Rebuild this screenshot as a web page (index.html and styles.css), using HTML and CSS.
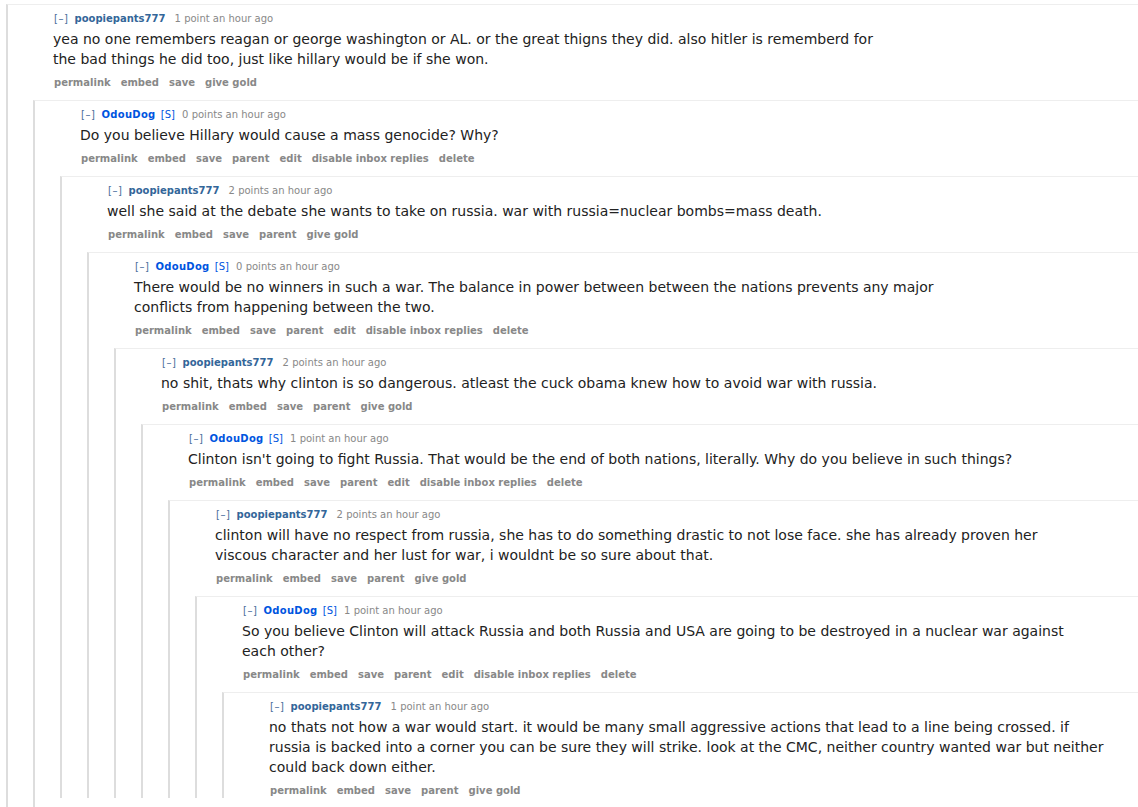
FILE: index.html
```html
<!DOCTYPE html>
<html lang="en">
<head>
    <meta charset="UTF-8">
    <title>comments</title>
    <link rel="stylesheet" href="styles.css">
</head>
<body>
    <div class="commentarea">
        <div class="comment has-more">
            <div class="entry">
                <p class="tagline"><a class="expand">[–]</a> <a class="author">poopiepants777</a> <span class="userattrs"></span> <span class="score">1 point</span> <time>an hour ago</time></p>
                <div class="md">yea no one remembers reagan or george washington or AL. or the great thigns they did. also hitler is rememberd for the bad things he did too, just like hillary would be if she won.</div>
                <ul class="buttons">
                    <li>permalink</li>
                    <li>embed</li>
                    <li>save</li>
                    <li>give gold</li>
                </ul>
            </div>
            <div class="child">

            <div class="comment has-more">
                <div class="entry">
                    <p class="tagline"><a class="expand">[–]</a> <a class="author submitter">OdouDog</a> <span class="userattrs">[S]</span> <span class="score">0 points</span> <time>an hour ago</time></p>
                    <div class="md">Do you believe Hillary would cause a mass genocide? Why?</div>
                    <ul class="buttons">
                        <li>permalink</li>
                        <li>embed</li>
                        <li>save</li>
                        <li>parent</li>
                        <li>edit</li>
                        <li>disable inbox replies</li>
                        <li>delete</li>
                    </ul>
                </div>
                <div class="child">

                <div class="comment">
                    <div class="entry">
                        <p class="tagline"><a class="expand">[–]</a> <a class="author">poopiepants777</a> <span class="userattrs"></span> <span class="score">2 points</span> <time>an hour ago</time></p>
                        <div class="md">well she said at the debate she wants to take on russia. war with russia=nuclear bombs=mass death.</div>
                        <ul class="buttons">
                            <li>permalink</li>
                            <li>embed</li>
                            <li>save</li>
                            <li>parent</li>
                            <li>give gold</li>
                        </ul>
                    </div>
                    <div class="child">

                    <div class="comment">
                        <div class="entry">
                            <p class="tagline"><a class="expand">[–]</a> <a class="author submitter">OdouDog</a> <span class="userattrs">[S]</span> <span class="score">0 points</span> <time>an hour ago</time></p>
                            <div class="md">There would be no winners in such a war. The balance in power between between the nations prevents any major conflicts from happening between the two.</div>
                            <ul class="buttons">
                                <li>permalink</li>
                                <li>embed</li>
                                <li>save</li>
                                <li>parent</li>
                                <li>edit</li>
                                <li>disable inbox replies</li>
                                <li>delete</li>
                            </ul>
                        </div>
                        <div class="child">

                        <div class="comment">
                            <div class="entry">
                                <p class="tagline"><a class="expand">[–]</a> <a class="author">poopiepants777</a> <span class="userattrs"></span> <span class="score">2 points</span> <time>an hour ago</time></p>
                                <div class="md">no shit, thats why clinton is so dangerous. atleast the cuck obama knew how to avoid war with russia.</div>
                                <ul class="buttons">
                                    <li>permalink</li>
                                    <li>embed</li>
                                    <li>save</li>
                                    <li>parent</li>
                                    <li>give gold</li>
                                </ul>
                            </div>
                            <div class="child">

                            <div class="comment">
                                <div class="entry">
                                    <p class="tagline"><a class="expand">[–]</a> <a class="author submitter">OdouDog</a> <span class="userattrs">[S]</span> <span class="score">1 point</span> <time>an hour ago</time></p>
                                    <div class="md">Clinton isn't going to fight Russia. That would be the end of both nations, literally. Why do you believe in such things?</div>
                                    <ul class="buttons">
                                        <li>permalink</li>
                                        <li>embed</li>
                                        <li>save</li>
                                        <li>parent</li>
                                        <li>edit</li>
                                        <li>disable inbox replies</li>
                                        <li>delete</li>
                                    </ul>
                                </div>
                                <div class="child">

                                <div class="comment">
                                    <div class="entry">
                                        <p class="tagline"><a class="expand">[–]</a> <a class="author">poopiepants777</a> <span class="userattrs"></span> <span class="score">2 points</span> <time>an hour ago</time></p>
                                        <div class="md">clinton will have no respect from russia, she has to do something drastic to not lose face. she has already proven her viscous character and her lust for war, i wouldnt be so sure about that.</div>
                                        <ul class="buttons">
                                            <li>permalink</li>
                                            <li>embed</li>
                                            <li>save</li>
                                            <li>parent</li>
                                            <li>give gold</li>
                                        </ul>
                                    </div>
                                    <div class="child">

                                    <div class="comment">
                                        <div class="entry">
                                            <p class="tagline"><a class="expand">[–]</a> <a class="author submitter">OdouDog</a> <span class="userattrs">[S]</span> <span class="score">1 point</span> <time>an hour ago</time></p>
                                            <div class="md">So you believe Clinton will attack Russia and both Russia and USA are going to be destroyed in a nuclear war against each other?</div>
                                            <ul class="buttons">
                                                <li>permalink</li>
                                                <li>embed</li>
                                                <li>save</li>
                                                <li>parent</li>
                                                <li>edit</li>
                                                <li>disable inbox replies</li>
                                                <li>delete</li>
                                            </ul>
                                        </div>
                                        <div class="child">

                                        <div class="comment">
                                            <div class="entry">
                                                <p class="tagline"><a class="expand">[–]</a> <a class="author">poopiepants777</a> <span class="userattrs"></span> <span class="score">1 point</span> <time>an hour ago</time></p>
                                                <div class="md">no thats not how a war would start. it would be many small aggressive actions that lead to a line being crossed. if russia is backed into a corner you can be sure they will strike. look at the CMC, neither country wanted war but neither could back down either.</div>
                                                <ul class="buttons">
                                                    <li>permalink</li>
                                                    <li>embed</li>
                                                    <li>save</li>
                                                    <li>parent</li>
                                                    <li>give gold</li>
                                                </ul>
                                            </div>
                                        </div>

                                        </div>
                                    </div>

                                    </div>
                                </div>

                                </div>
                            </div>

                            </div>
                        </div>

                        </div>
                    </div>

                    </div>
                </div>

                </div>
            </div>

            </div>
        </div>
    </div>
</body>
</html>
```

FILE: styles.css
```css
* {
    box-sizing: border-box;
    margin: 0;
    padding: 0;
}

body {
    background: #fff;
    color: #222;
    font-family: "DejaVu Sans", Verdana, sans-serif;
}

.commentarea {
    padding: 4px 0 0 6px;
}

/* Comment boxes */
.comment {
    border-left: 2px solid #ddd;
    border-top: 1px solid #eee;
}

.comment.has-more {
    padding-bottom: 30px;
}

.entry {
    padding-left: 45px;
}

.child {
    margin: 10px 0 0 25px;
}

/* Tagline */
.tagline {
    margin-top: 7px;
    padding-left: 1px;
    font-size: 10px;
    line-height: 14px;
    color: #888;
}

.tagline .expand {
    color: #4a6d9c;
    letter-spacing: 0.5px;
    margin-right: 3px;
}

.tagline .author {
    color: #369;
    font-weight: bold;
}

.tagline .author.submitter {
    letter-spacing: 0.3px;
}

.tagline .author.submitter,
.tagline .userattrs {
    color: #0055df;
}

.tagline .userattrs {
    margin: 0 4px 0 2px;
}

/* Comment body */
.md {
    margin-top: 3px;
    max-width: 840px;
    font-size: 14px;
    line-height: 20px;
    color: #222;
}

/* Buttons */
.buttons {
    display: flex;
    gap: 10px;
    margin-top: 7px;
    padding-left: 1px;
    list-style: none;
    font-size: 10px;
    line-height: 14px;
    font-weight: bold;
    color: #888;
}
```
